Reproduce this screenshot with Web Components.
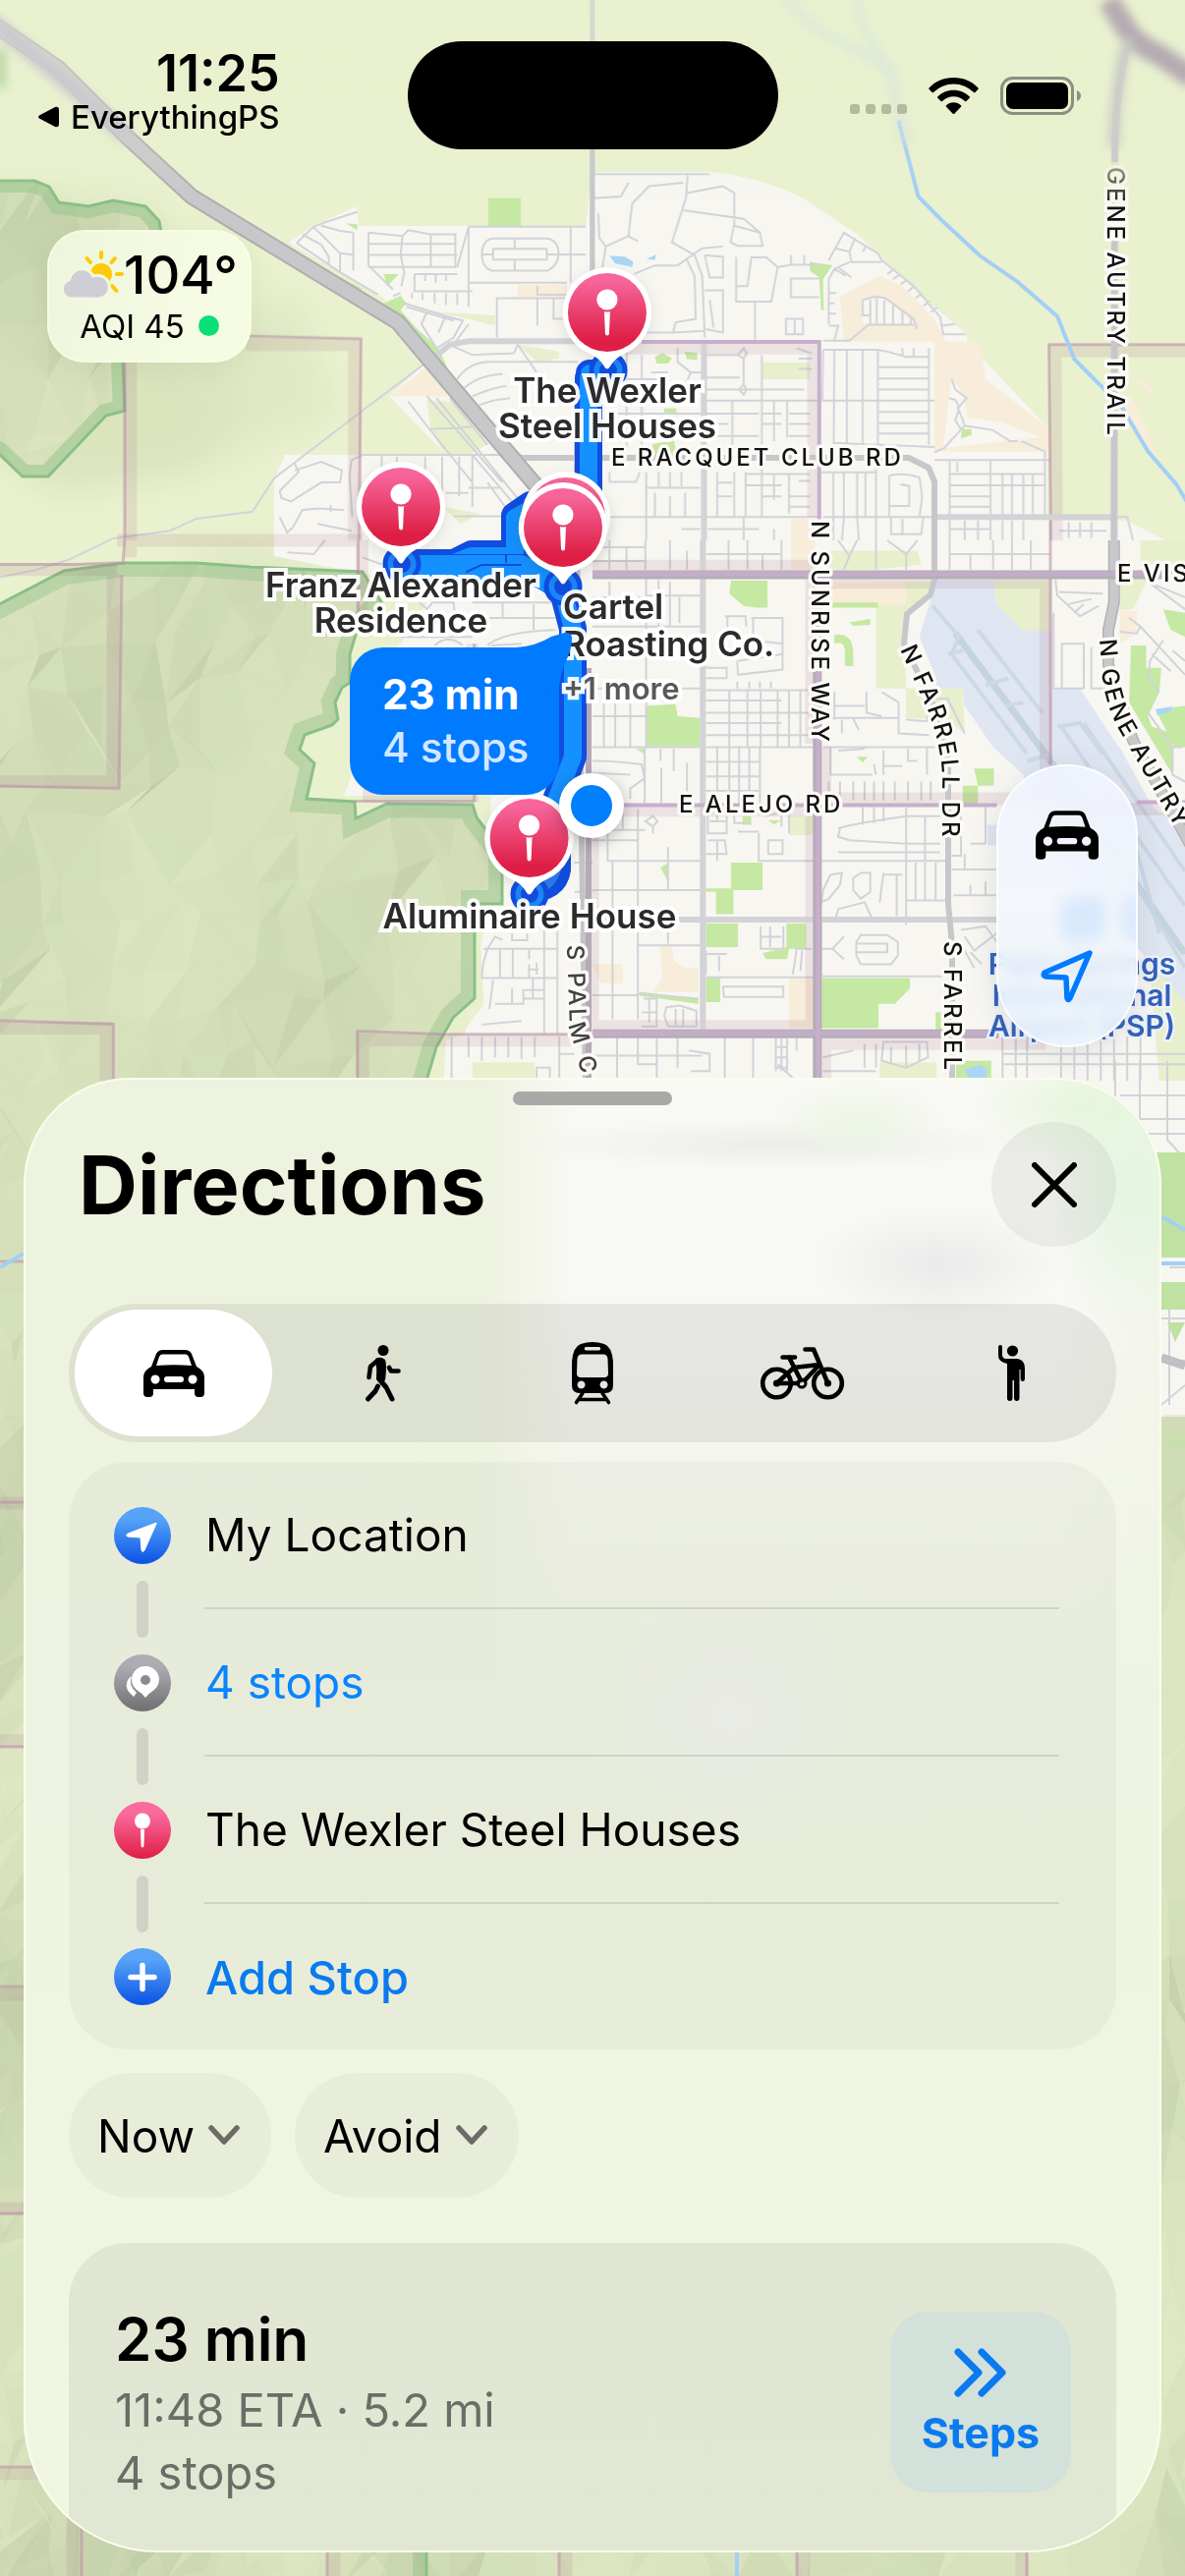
<!DOCTYPE html>
<html lang="en">
<head>
<meta charset="utf-8">
<meta name="viewport" content="width=device-width, initial-scale=1">
<title>Directions</title>
<style>
  body { margin: 0; background: #d5dfba; color: #000; font-family: Inter, "Liberation Sans", sans-serif; -webkit-font-smoothing: antialiased; }
</style>
</head>
<body>
<maps-app></maps-app>

<template id="t-app">
  <style>
    :host { display: flex; flex-direction: column; position: relative; min-height: 100vh; overflow: hidden; isolation: isolate; }
    area-map { position: absolute; inset: 0; z-index: -1; }
    weather-chip { margin: 82px 0 0 48px; align-self: flex-start; }
    .spacer { flex: 1; }
    map-controls { align-self: flex-end; margin: 0 48px 31px 0; }
    directions-sheet { margin: 0 24px 24px; }
  </style>
  <area-map></area-map>
  <status-bar></status-bar>
  <weather-chip></weather-chip>
  <div class="spacer"></div>
  <map-controls></map-controls>
  <directions-sheet></directions-sheet>
</template>

<template id="t-status">
  <style>
    :host { display: grid; grid-template-columns: 1fr 377px 1fr; padding-top: 42px; }
    .left { display: flex; flex-direction: column; align-items: flex-end; justify-self: start; padding: 8px 0 0 38px; }
    time { font-size: 52px; line-height: 50px; font-weight: 600; }
    a { display: flex; align-items: center; gap: 12px; font-size: 33px; line-height: 38px; font-weight: 500; color: #000; text-decoration: none; }
    .island { height: 110px; border-radius: 55px; background: #000; }
    .right { display: flex; align-items: flex-end; align-self: start; gap: 22px; padding: 36px 0 0 73px; }
    .dots { display: flex; gap: 6px; padding-bottom: 1px; }
    .dots i { width: 10px; height: 10px; border-radius: 3px; background: #b3bb9d; }
    svg { display: block; }
  </style>
  <div class="left">
    <time>11:25</time>
    <a href="#back"><svg width="22" height="22" viewBox="0 0 22 22"><path d="M2 9.5Q0 11 2 12.500L18 21Q22 22 22 18V4Q22 0 18 1Z"/></svg>EverythingPS</a>
  </div>
  <div class="island"></div>
  <div class="right">
    <div class="dots"><i></i><i></i><i></i><i></i></div>
    <svg width="51" height="38" viewBox="0 0 51 38"><path d="M25.500 0C35.500 0 44.500 4 50.500 10.500Q51 11.200 50.500 11.800L47.500 15Q46.700 15.700 46 15A29 29 0 0 0 5 15Q4.300 15.700 3.500 15L.5 11.800Q0 11.200.5 10.500C6.500 4 15.500 0 25.500 0ZM25.500 12.700C32 12.700 37.500 15.200 41.700 19.300Q42.300 20 41.700 20.700L38.400 24Q37.700 24.700 37 24A16.500 16.500 0 0 0 14 24Q13.300 24.700 12.600 24L9.300 20.700Q8.700 20 9.300 19.300C13.500 15.200 19 12.700 25.500 12.700ZM25.500 25.300C28.600 25.300 31 26.400 33 28.300Q33.700 29 33 29.700L26.300 36.700Q25.500 37.500 24.700 36.700L18 29.700Q17.300 29 18 28.300C20 26.400 22.400 25.300 25.500 25.300Z"/></svg>
    <svg width="83" height="39" viewBox="0 0 83 39"><rect x="1.500" y="1.500" width="72" height="36" rx="11" fill="none" stroke="#8b8f80" stroke-width="3"/><rect x="6" y="6" width="63" height="27" rx="7"/><path d="M78 14Q82 16 82 19.500T78 25Z" fill="#8b8f80"/></svg>
  </div>
</template>

<template id="t-weather">
  <style>
    :host { display: grid; justify-items: center; align-content: center; width: 208px; height: 135px; border-radius: 38px; box-sizing: border-box; background: linear-gradient(105deg, #edf5dc, #f4fbe2 60%, #f6fce4); box-shadow: inset 0 0 0 2px #fafee999, 0 8px 28px #52683018; }
    .temp { display: flex; align-items: center; font-size: 54px; line-height: 60px; font-weight: 500; }
    .aqi { display: flex; align-items: center; gap: 14px; font-size: 33px; line-height: 44px; }
    .aqi i { width: 21px; height: 21px; border-radius: 50%; background: #0be077; }
  </style>
  <div class="temp"><svg width="64" height="50" viewBox="0 0 64 50" aria-hidden="true"><g stroke="#ffc80a" stroke-width="4" stroke-linecap="round"><path d="M41 2V7M26.500 8L30 12M55 8L51.500 12M57 24H62M52 36L56.500 41"/></g><circle cx="41" cy="24" r="11" fill="#ffc80a"/><path d="M10 49A10 10 0 0 1 8.500 29.500A13 13 0 0 1 33 26A12 12 0 1 1 35 49Z" fill="#cfcdd6" stroke="#f1f8df" stroke-width="3"/></svg><span>104°</span></div>
  <div class="aqi"><span>AQI 45</span><i></i></div>
</template>

<template id="t-controls">
  <style>
    :host { display: flex; flex-direction: column; width: 144px; height: 288px; border-radius: 72px; overflow: hidden; background: linear-gradient(#f0f4fde8, #f3f6fcdc 50%, #ecf5fdd8); backdrop-filter: blur(7px); box-shadow: inset 0 0 0 2px #fffc, 0 6px 30px #4a587024; }
    button { flex: 1; border: 0; padding: 0; background: none; display: grid; place-items: center; }
  </style>
  <button aria-label="Driving map"><svg width="64" height="50" viewBox="0 0 62 48"><path fill-rule="evenodd" d="M13 4Q15 0 20 0H42Q47 0 49 4L54 17Q62 21 62 28V44Q62 48 58 48H56Q52 48 52 44V40H10V44Q10 48 6 48H4Q0 48 0 44V28Q0 21 8 17ZM19 4.500Q17 4.500 16 7L13 16Q31 14.500 49 16L46 7Q45 4.500 43 4.500ZM12 25.500a4.500 4.500 0 1 0 .1 0ZM50 25.500a4.500 4.500 0 1 0 .1 0ZM24 27a3 3 0 0 0 0 6H38a3 3 0 0 0 0-6Z"/></svg></button>
  <button aria-label="Track location"><svg width="54" height="54" viewBox="0 0 54 54" fill="none" stroke="#007aff" stroke-width="5.500" stroke-linejoin="round"><path d="M50 3L4 23Q2 26 5 27L26 28L27 49Q28 52 30 49Z"/></svg></button>
</template>

<template id="t-pin">
  <style>
    :host { position: absolute; display: flex; flex-direction: column; align-items: center; width: max-content; transform: translateX(-50%); left: calc(var(--x) * 1px); top: calc(var(--y) * 1px - 46px); }
    svg { width: 112px; height: 107px; flex: none; overflow: visible; filter: drop-shadow(0 4px 7px #3038301f); }
    ::slotted(*) { white-space: pre; text-align: center; font-size: 35px; line-height: 36px; font-weight: 600; color: #2b2b2b; -webkit-text-stroke: 8px #fffffff0; paint-order: stroke fill; }
    :host([align=start]) { align-items: flex-start; transform: none; }
    :host([align=start]) svg { margin-left: -56px; }
    :host([align=start]) ::slotted(*) { text-align: left; line-height: 38px; }
  </style>
  <svg viewBox="-10 0 112 107"><defs><linearGradient id="g" x2="0" y2="1"><stop offset=".1" stop-color="#f7659a"/><stop offset=".85" stop-color="#de1e45"/></linearGradient></defs><path d="M46 0A46 46 0 0 1 64 88Q54 92 49 101Q46 106 43 101Q38 92 28 88A46 46 0 0 1 46 0Z" fill="#fff"/><circle cx="46" cy="46" r="40" fill="url(#g)"/><circle cx="46" cy="33" r="10.600" fill="#fff"/><path d="M43 45Q46 46 49 45L48 68Q46 71 44 68Z" fill="#fff"/></svg>
  <slot></slot>
</template>

<template id="t-map">
  <style>
    :host { display: block; overflow: hidden; }
    .base { position: absolute; top: 0; left: 0; width: 100%; height: 100%; }
    .a { transform: scale(.3846, .3508); }
    .b { transform: translate(603px, 0) scale(.3846, .3508); }
    .c { transform: translate(0, 550px) scale(.3846, .3508); }
    .d { transform: translate(603px, 550px) scale(.3846, .3508); }
    path, polygon, rect { vector-effect: non-scaling-stroke; }
    .minor path { fill: none; stroke: #d2d3d9; stroke-width: 2; }
    .road text { font-size: 24px; font-weight: 500; letter-spacing: 3px; fill: #111; stroke: #fbfaf6; stroke-width: 7; stroke-linejoin: round; paint-order: stroke; }
    .place { font-size: 30px; font-weight: 600; fill: #3461bb; stroke: #eef2f8; stroke-width: 5; paint-order: stroke; text-anchor: middle; }
    .me { position: absolute; left: 569px; top: 787px; width: 42px; height: 42px; border: 12px solid #fff; border-radius: 50%; background: #007fff; box-shadow: 0 4px 16px #0004; }
    .callout { position: absolute; left: 356px; top: 659px; width: 213px; height: 150px; box-sizing: border-box; padding: 21px 0 0 33px; border-radius: 34px; background: #007aff; color: #fff; font-size: 42px; line-height: 54px; font-weight: 700; }
    .callout span { display: block; font-weight: 500; color: #d3e7ff; }
    .callout svg { position: absolute; right: -16px; top: -16px; }
    .callout b { position: relative; font-weight: 700; }
    map-pin .more { font-size: 31px; line-height: 54px; color: #585858; }
  </style>
  <svg class="base" viewBox="0 0 1206 2622" preserveAspectRatio="xMidYMin slice">
    <defs>
      <clipPath id="hills"><path id="hp" d="M-20 625L65 581 127 573 200 573 254 577 369 582 388 613 362 646 356 666 356 695 348 700 341 715 344 732 338 738 310 748 305 763 320 777 312 813 361 816 362 833 394 818 481 819 485 832 511 866V920H483V1016L461 1036 444 1066 434 1100V2640H-20Z"/></clipPath>
      <clipPath id="peak"><path id="pk" d="M-20 183L0 184 35 184 50 190 60 206 90 210 115 204 148 210 162 225 168 260 165 330 125 369 127 418 108 423 85 447 49 485H23L0 463-20 450Z"/></clipPath>
      <clipPath id="low"><rect y="1440" width="1206" height="1200"/></clipPath>
      <filter id="soft"><feGaussianBlur stdDeviation="5"/></filter>
      <filter id="haze" x="-20%" y="-20%" width="140%" height="140%"><feGaussianBlur stdDeviation="16"/></filter>
      <linearGradient id="fade" x2="0" y2="1"><stop stop-color="#e9f1cf"/><stop offset="1" stop-color="#e9f1cf" stop-opacity="0"/></linearGradient>
    </defs>
    <rect width="1206" height="2622" fill="#e9f1cf"/>
    <rect y="1430" width="1206" height="1200" fill="#d9e4bf"/>
    <g filter="url(#haze)" fill="#8fa36a" opacity=".16"><path d="M-20 190L160 215 175 360 250 400 200 480 60 500-20 450Z"/><path d="M130 370L300 300 340 420 200 480Z" opacity=".6"/><path d="M180 560L340 570 250 600Z"/></g>
    <path fill="#f7f6f1" d="M294 247L318 230 363 210 365 230H596L603 175H726Q780 182 818 202L872 238 934 298 984 340V348L1066 435V530H1147L1206 560V1442H430L452 1097 454 1050 473 1048 492 1023 488 971 492 950 500 810H350L408 648 400 590 279 566V488L290 463H454L396 403 435 368 390 303Z"/>
    <g fill="#e7efcc"><path class="b" d="M450 1052H575V1100H450Z"/><path class="a" d="M1150 905L1310 915V945L1220 920ZM1370 1000L1480 1020V1040L1420 1050ZM1130 1160L1230 1170 1290 1290 1240 1320 1180 1325 1140 1250ZM1170 1470L1270 1490 1220 1520Z"/><path class="c" d="M1050 180H1130L1060 300 940 270ZM1250 1515H1415V1568H1250ZM1270 1150L1230 1430 1180 1450 1200 1390 1280 1330Z"/><path class="d" d="M605 30H860L870 70 750 85 620 85ZM750 120H905L825 240 830 430H750ZM1065 115H1210V265H1140L1065 180ZM1450 0H1568V70H1450ZM1395 110H1470L1430 200H1395ZM830 430H980L985 560 940 520 830 515ZM520 800H590V855H520ZM760 1515H910V1568H760ZM1440 790H1568L1568 1568H1500Z"/></g>
    <g fill="#f8ecda"><path class="a" d="M1030 1150L1135 1060 1195 1150ZM1370 825H1500V862H1370Z"/><path class="b" d="M655 860L760 800 820 830 900 920 935 990 1025 995 1040 1100 1205 1240V1310H905V990H665ZM715 870V940H855L770 862ZM1420 1090L1480 1120V1145ZM1390 1150L1430 1150 1495 1320 1450 1280ZM525 1505H590V1568H525Z" fill-rule="evenodd"/><path d="M968 385L980 400 985 425 1020 430 1060 445 960 456Z" fill="#f7f6f1"/><path class="d" d="M525 0H590V85H525ZM630 122H830V185H630ZM1395 200L1440 205V270L1395 300ZM180 1175L210 1170 215 1220 240 1240H280V1310H160L185 1270ZM0 1230H80V1285H20ZM520 1270H590V1415H520Z"/></g>
    <g fill="#c5e8a3"><path class="a" d="M1292 575H1378V657H1292ZM915 648L945 650V668ZM1015 795H1055L1025 830ZM890 800L955 835 960 850ZM1015 880L1060 858 1075 880 1060 900 1100 950 1160 1010 1185 1070 1170 1075 1060 930Z"/><path class="b" d="M575 760L635 770 610 810 612 900H605L600 805 575 785ZM165 1035L185 1025 210 1040 200 1055H170ZM243 1020L277 1025V1045L250 1042ZM190 1185H222V1200H190ZM158 1290L215 1275 225 1330H165ZM978 1245L1003 1245V1262L975 1272Z"/><path class="d" d="M367 117H463V195H435L400 190 362 155ZM142 480L220 475 225 510 285 515V598H142ZM630 180H755V195H630ZM680 238L735 228V245L690 248ZM640 275Q690 265 690 330V365H668V320Q665 290 640 300ZM115 605H142L135 618ZM1010 662H1062V712H1020ZM980 712H1020V765H980ZM698 628L728 628 715 645ZM397 800H420V825H397ZM465 812H498L480 825ZM180 950L200 935V990ZM367 935H450V1015H373V1085H327V1020H300V1010H367ZM300 1112H385V1180H300ZM513 1112H565V1185H520L515 1215H460L450 1198 513 1180ZM605 1270H840V1300L800 1345H757V1415H605ZM300 1270H338V1340H300ZM125 1310L280 1330V1345L125 1322ZM962 1510H1055V1568H962ZM1425 305H1465V370L1505 370 1500 440 1470 510 1480 540 1535 560 1535 680 1420 470ZM1510 200L1568 210V280L1530 260ZM1490 490L1568 480V600H1540ZM908 1370H925V1420H908Z"/></g>
    <g fill="#a9d6f6"><path class="b" d="M45 742L85 745 108 760 105 775 60 765ZM143 752L168 738 165 755Z"/><path class="d" d="M1490 490L1535 482 1530 495 1495 508ZM985 1535L1025 1522 1045 1535 1040 1568H1000Z"/></g>
    <g class="d"><path fill="#dfe6f1" d="M910 115H1065V180L1140 262H1215V430H1290L1380 580 1400 610 1480 770 1568 850V1340L1440 1180 1200 900 1140 680 1060 600 985 480 980 430H910V400L865 280ZM1045 825H1075V885H1045Z"/><path fill="none" stroke="#c4d4df" stroke-width="7" d="M960 270L1205 630 1568 1200"/><path fill="none" stroke="#ccd9e4" stroke-width="4" d="M900 190L970 280 950 330 1150 620M1020 260L1190 500M940 330L980 320M1040 420L1100 400M1090 480L1140 470M1150 640L1215 620M1230 540L1290 530 1350 620M1240 540L1440 860 1568 1060M1300 530L1568 960M1440 900L1500 1140M1440 1000L1568 1240"/></g>
    <g clip-path="url(#hills)"><rect y="560" width="520" height="2070" fill="#d5e0bb"/><g id="mesh"></g><use href="#hp" fill="none" stroke="#9cc68f" stroke-opacity=".5" stroke-width="28"/></g>
    <g clip-path="url(#peak)"><rect width="200" height="500" fill="#d3deb9"/><g id="mesh2"></g><use href="#pk" fill="none" stroke="#9cc68f" stroke-opacity=".6" stroke-width="24"/></g>
    <g clip-path="url(#low)" id="mesh3"></g>
    <g fill="none" stroke="#8bbf88" stroke-width="3"><use href="#hp"/><use href="#pk"/></g>
    <g class="minor">
      <path class="a" d="M945 615L860 645 830 658 785 705M830 660L850 680 900 735V790M800 680L850 710 870 745V765M785 705L900 790 1000 855M850 655L900 670 935 675M935 675V785M975 675V770L1040 840M975 675L1065 685 1080 668 1140 680 1205 680V775H975M975 708H1205M975 740H1210M1065 685L1060 740 1070 790 1062 830M1140 680V775M1240 658V890M1240 658H1550M1300 692H1450Q1478 700 1478 735T1450 785H1300Q1275 775 1275 738T1300 692M1305 722H1447V753H1305ZM1275 738H1305M1447 738H1550M1362 692V722M1362 753V785M1240 820H1500M1510 658V820M1210 775L1240 658M1097 795H1210M1097 795V845H1250M1125 795V815M1153 795V820M1180 795V815M1090 850V865M1118 850V870M1150 850V880M1180 850V885M1210 850V885M1315 980V865H1500M1422 830V855H1500M1422 865V945M1465 865V925H1500M1060 850L1040 860M900 735L935 740M1070 880L1205 925 1225 930 1200 980 1155 1010 1115 940 1130 905M1075 890L1200 930M1178 920L1160 965M1240 940L1200 1000M1190 1000L1250 1030 1360 1025 1370 1000M1210 1100Q1240 1050 1300 1050H1530M1225 1130Q1260 1090 1330 1085M1250 1150Q1300 1125 1340 1120M1260 1180Q1300 1160 1350 1155M1370 1000L1420 1080M1130 1150L1330 1400M1080 1165L1140 1250 1250 1400M1155 1155L1380 1460M1190 1155L1290 1290M1140 1245L1250 1238M960 1320H1380M960 1320L930 1335 925 1380 932 1500M1010 1320V1440M1050 1325V1340M1125 1325V1410M1170 1325V1480M1215 1325V1440M1250 1325V1470M1290 1400L1340 1475M1240 1415H1320M1200 1498H1330M1180 1430H1240M1250 1320L1370 1475M780 1365L850 1340 905 1365 900 1400 850 1400 770 1455 745 1445 740 1425 790 1370 780 1345M740 1500L760 1545 775 1530 800 1480 840 1475 910 1480M840 1520L930 1540M875 1465V1485M1130 1050L955 1195 725 1388 668 1485 520 1505 450 1540 300 1562 180 1625 90 1655 0 1675"/>
      <path class="b" d="M0 505H310M252 505L247 575 210 703 270 740 290 800 297 980M0 575L75 570 95 530M250 560L345 540 375 560V650L365 703 385 713H450L443 675 375 655M240 610L400 635 443 675M15 620L18 690 35 715 95 685 105 590 150 540 240 530M35 715L20 820M95 685L120 700M110 795L165 770H225L290 720 345 715M297 740L345 745V805H310L297 740M380 745V875H473L490 775 460 747H420L410 830H380M430 875V985M490 775L525 768H605M525 740V768M560 740V768M600 808H525V862H600M512 925H557V970H512ZM535 925V970M213 965L220 935 275 925M297 842H345V965L300 955M310 870L320 950M250 755L270 800 273 925M110 965H215L297 960M625 755L665 675 755 735 765 755 850 830 920 920 928 970H988M640 720L680 730 685 760H765M695 690L680 730M715 730L725 712M680 760L640 780 625 810V940M640 780L670 800M650 775L685 805M610 988L680 988 730 942H850M625 945H650L640 988M625 850H645M625 880H640M625 910H645M715 870L750 860 775 865 850 925 858 955M715 870V915H732M735 870V942M752 865V940M772 870V940M795 885V940M820 905V940M842 920V940M780 795L800 780M795 810L815 795M815 825L833 810M835 845L852 830M855 865L872 850M875 888L893 873M895 905L912 892M920 945L960 940M610 1015H755L780 1020 830 1035H890M610 1015L608 1162H905M640 1015L638 1285 905 1297M673 1015V1285M715 1015V1287M755 1015V1290M890 1010V1290M755 1065H888M755 1098H888M755 1130H888M755 1195H888M755 1228H888M755 1258H888M850 1010V1035M820 1010V1030M300 1030H385M300 1095H390M300 1130H560M300 1162H600M448 1030V1500M370 1162V1300M480 1162V1280M515 1162V1270M300 1200H440M450 1200H500M520 1200H575M300 1230H360M450 1230H500M520 1230H575M300 1265H440M520 1265H575M385 1030L400 1010 408 1025 400 1040ZM400 1040V1115L388 1130 400 1145 408 1130 400 1115M540 1010L580 1025M545 1040H580M545 1070H580M130 1030V1300M155 1080H200M30 1100H190M130 1160L200 1155M225 1010V1050L260 1080H290M240 1130L260 1080M60 1200H290M60 1240H190M90 1000V1300M945 1335V1568M905 1335H1210M1197 1310V1500M1053 1335V1568M945 1375H1197M945 1408H1197M965 1340V1370M1085 1375V1495M1110 1375V1495M1140 1375V1495M1165 1375V1495M945 1440H1050M945 1470H1050M985 1510V1568M1020 1510V1568M1085 1510V1568M1110 1510V1568M1140 1510V1568M945 1535H1050M950 1100L960 1130 990 1155 970 1180 960 1160 943 1155M965 1180L975 1205 985 1235 1060 1248 1105 1280H1125M985 1235L955 1270 930 1300 905 1312M970 1185L960 1220 975 1245M1135 1280L1197 1310M40 1500H600M45 1370V1398H115L125 1370M142 1415H285M142 1370V1568M175 1370V1415M205 1370V1415M235 1370V1410M165 1430V1500M205 1440V1500M245 1430V1500M330 1370V1500M375 1370V1500M405 1370V1500M330 1400H370M330 1440H370M405 1375H575M405 1408H445M450 1408H500M520 1375V1490M480 1375V1450M450 1440H500M520 1440H575M520 1470H575M545 1395H575M235 1535H285M305 1535H440M400 1500V1568M480 1535V1568M605 1370H750M637 1370V1568M665 1370V1500M700 1370V1500M722 1370V1500M750 1340V1568M785 1380Q820 1370 865 1385L872 1440 865 1500M785 1380V1500M815 1405L838 1410V1468H785M610 1500H905M665 1500L660 1568M700 1500L705 1568M790 1500V1550H870L875 1500M820 1505V1550M1210 1510V1568M1235 1540H1360M1260 1515V1560M1290 1515V1560M1320 1515V1560M1380 1500H1415L1430 1568"/>
      <path class="c" d="M1060 280H1250M1110 180L1130 200 1145 180H1200L1210 280M1250 180H1470M1285 225H1470M1290 305Q1330 265 1470 260M1300 305L1380 300M1330 180V225M1412 185V260M1150 305Q1185 270 1225 305M1280 1185H1475M1275 1270H1475M1290 1185L1278 1230 1275 1270M1323 1185V1270M1357 1185V1270M1400 1185V1215M1440 1130V1430M1475 1130V1430M1400 1230V1270M1420 1225V1260M1400 1245H1425M1305 1275L1295 1360M1310 1345H1385V1305H1440M1355 1300V1345M1385 1330H1440M1275 1405L1380 1395M1410 1270V1330M1290 1185L1310 1150 1330 1160M1355 1140V1160H1395V1140M1195 1440V1568M1240 1440V1500M1275 1440V1510M1310 1440V1500M1345 1440V1500M1380 1440V1505M1415 1440V1500M1420 1568V1530H1455V1568M1480 1440V1568M1480 1490H1520M1520 935H1568M1520 1020H1568M1520 1100H1568M1545 860V1200M760 35L830 40 860 0M960 50L1010 70"/>
      <path class="d" d="M0 20H140M0 60H140M45 0V85M90 20V85M140 0V85M205 0V85M250 30V85M300 40H500M360 0V85M410 0V85M450 40V85M500 0V85M650 0L680 45 665 85M680 45L700 0M780 0L830 40 860 0M830 40V85M750 0V85M945 0V85M945 40H1210M1000 40V85M1060 0V85M1110 0V85M1160 0V85M45 120V160M0 165H140M142 110V600M142 160H285M175 115V250M205 120V250M230 165V240M0 250H285M350 220H405L407 250M420 225H503V375L385 390 383 350M425 225V290L503 300M385 350L503 330M357 255V220M300 370H355V400H300M383 410V430M415 410V430M443 410V430M472 410V430M0 430H290M300 435H590M300 465H500M300 500H590M300 530H500M300 565H590M362 435V768M410 435V600M445 435V600M490 435V600M520 435V600M550 435V600M0 600H290M300 600H595M300 643H440M300 685H440M300 727H440M330 600V768M388 600V768M415 600V768M443 600V768M0 510H140M30 470V600M60 470V600M100 470V600M0 640Q60 640 130 650L138 690 100 720V750M0 675L100 680M0 720L60 715M138 600V768H0M180 605V640M215 605V670M250 645V730M182 660V768M160 830V850M140 815L160 800 172 815 160 830ZM40 780V930M0 840H140M0 870H120M120 780V1110M40 930H290M0 1015H290M80 780V840M53 930V1390M0 1110H50M120 1110V1390M200 890V1015M200 1110V1170M120 1175H290M305 780V850H355V780M310 815H355M330 780V815M375 770V820H420M385 845H440M305 870H350L355 910H300M330 870V930M465 870H503V910H465ZM440 850V930H590M520 770V850M455 800L500 790V830M640 440V520M610 515H810M640 480H720M660 520V560M690 518L705 550M725 440V500L765 510M810 468V560L890 565M765 440L810 470M830 520L885 525 890 480M900 460H940L985 560M630 600V680M610 600H920M650 610L720 605M770 610V680M745 650L750 680M835 605V640H860M885 600V680M630 680H740M770 655H820M625 700V755M655 700V755M690 700V755M720 700V755M745 700V755M770 700V755M800 700V755M835 700V755M870 700V755M895 700V755M650 835Q700 820 830 800H920M655 835L650 860 680 870 830 880H920M715 775V825M745 775V820M770 775V815M830 775V1115M880 800V930M650 905H920M605 930H940M630 970L610 1015 605 1060M630 970L660 965 655 1000 625 1040 605 1050M690 980L710 965H735V1020L710 1040 690 1015ZM770 965L760 1050M770 970H820M805 970V1090M830 1045H940M640 1110L650 1070 720 1050 745 1110M855 935V1045M880 935V1045M908 935V1045M605 1185H635L665 1150M635 1185L665 1215M710 1145H780L808 1165V1205L790 1230H710L698 1205V1165ZM700 1170H780V1195H700M605 1265H925M605 1265V1110M345 1295H505V1325H348ZM300 1190V1260M335 1205V1250M355 1200H300M300 1268H590M0 1320H120M120 1315L280 1330M445 1120V1185H505V1120M470 1120V1180M445 1150H500M535 1185H580M540 1190L530 1260M555 1190L550 1250M135 1330H170V1410H130M150 1330V1400M130 1370H170M195 1355L230 1350 275 1365V1410H200L190 1380ZM220 1360V1410M240 1360V1410M0 1495H290M65 1440V1560M120 1440V1520H170M170 1440V1568M225 1440V1530M255 1480L310 1490V1540L260 1540M350 1440V1568M425 1440V1568M485 1445V1540M500 1445V1540M515 1445V1540M485 1470H515M485 1500H515M485 1530H515M540 1445V1480M490 1520L530 1560M770 1455H885L888 1500 830 1530 765 1510ZM790 1470V1515M830 1465V1525M865 1460V1510M610 1500L690 1480M720 1460V1530M750 1460V1530M610 1540H750M1085 1440V1568M1120 1440V1568M1150 1440V1568M1240 1440V1568M1275 1440V1568M1310 1440V1568M1345 1440V1568M1380 1440V1568M1415 1440V1568M1450 1440V1568M1085 1520H1568M1085 1490H1568M1225 115L1230 160 1290 220 1340 190M1235 150L1350 155M1260 185L1320 170M1275 210L1300 185M1242 300H1300V430H1242ZM1220 210V430H1300M1320 310V430H1365M1395 265L1440 270 1450 250M1420 225L1450 250 1568 390M1470 120L1568 200M1490 130L1568 165M1510 290L1475 350 1470 400 1500 440M1535 320L1568 350M1470 500L1535 600H1560M1535 600V680L1568 700M1480 330L1530 380M975 780V915H950M1040 770V880M1000 880H1040M950 955H1070M985 910V955M1000 1000V1030M1040 990V1030M955 1030H1070M975 1130L1040 1120 1070 1165M985 1150L1010 1190 1070 1140M980 1180L1010 1240M1000 1195L1030 1230"/>
      <path d="M1135 1080V1130M1160 1080V1180M1188 1080V1160L1206 1180M1140 1115H1206M1150 1139H1206M1165 1154H1206M1190 1290H1206M1182 1342H1206M1182 1385H1206M1190 1310V1430M1182 1430L1206 1410"/>
    </g>
    <g fill="#bfe2a2"><path d="M1176 1173H1206V1280H1176ZM1182 1305H1206V1333H1182ZM1188 1346H1206L1196 1366Z"/><path fill="#cadfaf" d="M1182 1459H1206V1475H1182Z"/></g>
    <g fill="none" stroke="#9c5f78" stroke-opacity=".13" stroke-width="13"><path class="a" d="M345 1050V1568M650 1000H938V1568"/><path class="b" d="M50 1010H585V1500M1568 1018H1224L1228 1568"/><path class="c" d="M310 0H960M345 0V50M0 85H310M300 100L298 700H0M958 0V270M960 740H1250V300M0 1415H280V1568M1568 1450H960V1568"/><path class="d" d="M0 75H590M580 110V590M600 122H1200V760M615 600V750H1200M0 783H580V1410H0V800M600 1460H1200M615 1440V1568M1230 780H1568"/><path d="M0 1530H24M0 1772H24M0 2030H24M0 2248H24M0 2518H80M74 2560V2622M340 2590V2622M576 2590V2622M818 2590V2622M1040 2590V2622"/></g>
    <g fill="none" stroke="#b98aa4" stroke-opacity=".55" stroke-width="3"><path class="a" d="M330 1050V1568M650 975L955 983 950 1568"/><path class="b" d="M1568 1000H1208L1213 1568"/><path class="c" d="M330 0L325 70M0 70H200L320 65M322 100L315 720 0 713M948 0V270M940 757H1255V300M0 1393L300 1404V1568M1568 1433H1180L946 1424V1568"/><path d="M1069 550V778M0 1284H24M0 1529H24M0 1778H24M0 2022H24M0 2253H24M0 2511H45M83 2560V2622M333 2590V2622M569 2590V2622M811 2590V2622M1045 2590V2622"/></g>
    <g fill="none" stroke="#a3cff5" stroke-width="4"><path class="b" d="M810 350L862 570 920 635 1025 742 1125 818 1230 918 1275 1042 1400 1180 1470 1310 1545 1405 1575 1460"/><path d="M0 1290L24 1276M750 2590V2622M1182 1238L1206 1252M1182 1286H1206"/></g>
    <g fill="none" stroke="#cfe0e4" stroke-width="9" opacity=".7" filter="url(#soft)"><path class="b" d="M500 -10L600 90 790 200 800 280 830 420M695-10L720 90 790 210"/></g>
    <g fill="none" stroke="#d3d3d7" stroke-width="6"><path class="b" d="M295 990V1568"/><path class="d" d="M292 0V1430M0 1100H1070"/><path class="b" d="M905 1500H1380"/><path class="a" d="M1150 1035L1190 1000 1240 990H1550"/></g>
    <g fill="none" stroke="#c7c7cb" stroke-width="6"><path class="b" d="M0 -20V800" stroke-width="5"/><path d="M526 466H603M603 466L925 466 945 476 951 490V590L947 605 923 625 920 655 957 733 965 778V920L969 962V1100"/><path class="b" d="M1425 100Q1380 250 1382 480L1380 1568" stroke-width="7"/></g>
    <g fill="none"><path class="d" d="M1380 0V180L1365 260 1365 360 1430 580 1600 920" stroke="#b3b3b6" stroke-width="12"/><path class="d" d="M1380 0V180L1365 260 1365 360 1430 580 1600 920" stroke="#c9c9cc" stroke-width="9"/></g>
    <g fill="none"><path d="M587 410V480M587 550L596 1100" stroke="#c4c3c8" stroke-width="6"/><path d="M599 680V1110" stroke="#b7a9b8" stroke-width="6"/><path class="d" d="M0 100H1568M0 1432H1075M595 110V1568" stroke="#b5adb9" stroke-width="9"/><path class="d" d="M0 97H1568M0 1430H1075" stroke="#c3aec8" stroke-width="5"/><path class="d" d="M597 110V1568M0 768H1070M1440 760H1568" stroke="#c7b0cc" stroke-width="4"/><path class="b" d="M130 992H600V1568" stroke="#c7b0cc" stroke-width="4"/></g>
    <path d="M1182 1382L1206 1390" stroke="#bfbfc5" stroke-width="9"/>
    <g fill="none" stroke-linejoin="round"><path d="M-20 15L60 70 130 140 195 200 405 328 430 358 580 535" stroke="#aeaeb1" stroke-width="17"/><path d="M-20 15L60 70 130 140 195 200 405 328 430 358 580 535" stroke="#c8c8cb" stroke-width="13"/></g>
    <rect width="1206" height="200" fill="url(#fade)" opacity=".5"/>
    <g fill="none" filter="url(#soft)"><path d="M-10 20L60 78 130 140" stroke="#cacace" stroke-width="16"/><path d="M1128 0L1150 35Q1165 50 1180 56L1215 80" stroke="#b5aab2" stroke-width="22"/><path d="M1148 40Q1135 80 1134 150" stroke="#cccdc8" stroke-width="12"/><path d="M0 50V90" stroke="#bcd8a4" stroke-width="12"/></g>
    <g fill="none" stroke-linejoin="round" stroke-linecap="round">
      <path d="M412 573H462L480 564H524V525L540 514M540 575L572 598 583 640V770L560 830 562 880M599 385V520M600 380H620" stroke="#104de0" stroke-width="28"/>
      <path d="M412 573H462L480 566H524V527L540 518M540 577L572 598 583 640V770L563 822 560 890M599 385V520M600 380H620" stroke="#1590ff" stroke-width="18"/>
      <path d="M412 578H540L572 598" stroke="#104de0" stroke-width="28"/><path d="M412 577H530L572 598" stroke="#1590ff" stroke-width="24"/><path d="M475 582L490 575H530M515 565V572" stroke="#104de0" stroke-width="2"/>
      <path d="M539 905Q565 905 568 885V870" stroke="#104de0" stroke-width="26"/><path d="M542 903Q560 900 564 880" stroke="#2a7cf0" stroke-width="16"/>
    </g>
    <g fill="#1a87fb" stroke="#104de0" stroke-width="5"><circle cx="409" cy="574" r="17"/><circle cx="573" cy="597" r="17"/><circle cx="539" cy="910" r="17"/><circle cx="619" cy="377" r="17"/></g>
    <g fill="#104de0"><circle cx="409" cy="574" r="9"/><circle cx="573" cy="597" r="9"/><circle cx="539" cy="910" r="9"/><circle cx="619" cy="377" r="9"/></g>
    <defs>
      <path id="r2" d="M916 661L945 725Q960 765 959 800V900"/><path id="r4" d="M1119 651L1122 690Q1126 720 1140 745L1230 900"/><path id="r5" d="M577 962L580 1050Q590 1080 596 1120"/>
    </defs>
    <g class="road">
      <text x="622" y="474">E RACQUET CLUB RD</text>
      <text x="691" y="827">E ALEJO RD</text>
      <text x="1137" y="592">E VIS</text>
      <text transform="translate(826 530) rotate(90)">N SUNRISE WAY</text>
      <text><textPath href="#r2">N FARRELL DR</textPath></text>
      <text transform="translate(961 958) rotate(90)">S FARREL</text>
      <text><textPath href="#r4">N GENE AUTRY</textPath></text>
      <text fill-opacity=".8"><textPath href="#r5">S PALM C</textPath></text>
      <text transform="translate(1127 170) rotate(90)">GENE AUTRY TRAIL</text>
    </g>
    <rect x="1115" y="165" width="36" height="45" fill="url(#fade)" opacity=".7"/>
    <g fill="#3d9bf5"><rect x="1079" y="912" width="46" height="46" rx="12"/><path d="M1156 912H1152Q1142 912 1142 924V946Q1142 958 1152 958H1156Z"/></g>
    <text class="place"><tspan x="1101" y="992">Palm Springs</tspan><tspan x="1101" y="1024">International</tspan><tspan x="1101" y="1055">Airport (PSP)</tspan></text>
  </svg>
  <map-pin style="--x:618;--y:318"><span>The Wexler
Steel Houses</span></map-pin>
  <map-pin style="--x:408;--y:516"><span>Franz Alexander
Residence</span></map-pin>
  <map-pin style="--x:576;--y:526"></map-pin>
  <map-pin align="start" style="--x:573;--y:537"><span>Cartel
Roasting Co.</span><span class="more">+1 more</span></map-pin>
  <map-pin style="--x:539;--y:853"><span>Aluminaire House</span></map-pin>
  <div class="callout"><svg width="60" height="70" viewBox="0 0 60 70"><path d="M0 16Q20 15 36 5L50 1Q58 0 57 9Q56 20 51 30Q45 42 43 66L20 60Z" fill="#007aff"/></svg><b>23 min</b><span>4 stops</span></div>
  <div class="me"></div>
</template>

<template id="t-sheet">
  <style>
    :host { display: flex; flex-direction: column; overflow: hidden; padding: 14px 46px 0; border-radius: 108px 108px 136px 136px; position: relative;
      background: radial-gradient(110px 60px at 1080px 30px, #e6f6da, transparent), radial-gradient(90px 150px at 1130px 110px, #e3f5e0, transparent), radial-gradient(90px 40px at 850px 45px, #ebf6e2, transparent), radial-gradient(260px 26px at 770px 68px, #ececea, transparent), radial-gradient(130px 60px at 930px 190px, #ebeaea, transparent), radial-gradient(160px 130px at 720px 650px, #f1f3ee, transparent), linear-gradient(transparent 240px, #eff4e2 620px, #f1f6e1), linear-gradient(90deg, #eef3df, #eef3df 470px, #f8f8f5 560px, #f8f8f5 1050px, #f3f5ec); }
    :host::after { content: ""; position: absolute; inset: 0; border-radius: inherit; box-shadow: inset 0 0 0 2px #fafdeb; pointer-events: none; }
    .grab { width: 162px; height: 14px; border-radius: 7px; background: #a9a9a7; align-self: center; }
    header { display: flex; align-items: center; justify-content: space-between; margin-top: 17px; padding-left: 10px; }
    h1 { margin: 0; font-size: 83px; line-height: 96px; font-weight: 700; }
    .close { width: 127px; height: 127px; border: 0; border-radius: 50%; padding: 0; background: #0000000d; display: grid; place-items: center; }
    travel-modes { margin-top: 58px; }
    stop-list { margin-top: 20px; }
    .filters { display: flex; gap: 24px; margin-top: 24px; }
    route-card { margin-top: 46px; }
  </style>
  <div class="grab"></div>
  <header>
    <h1>Directions</h1>
    <button class="close" aria-label="Close"><svg width="46" height="46" viewBox="0 0 46 46" stroke="#000" stroke-width="6" stroke-linecap="round"><path d="M3 3L43 43M43 3L3 43"/></svg></button>
  </header>
  <travel-modes></travel-modes>
  <stop-list>
    <stop-row kind="here">My Location</stop-row>
    <stop-row kind="stops" tone="link">4 stops</stop-row>
    <stop-row kind="pin">The Wexler Steel Houses</stop-row>
    <stop-row kind="add" tone="action">Add Stop</stop-row>
  </stop-list>
  <div class="filters">
    <filter-pill name="when" value="Now"></filter-pill>
    <filter-pill name="avoid" value="Avoid"></filter-pill>
  </div>
  <route-card></route-card>
</template>

<template id="t-modes">
  <style>
    :host { display: block; }
    fieldset { display: grid; grid-template-columns: repeat(5, 1fr); margin: 0; padding: 0; border: 0; height: 141px; border-radius: 71px; background: #00000012; }
    label { display: grid; place-items: center; margin: 6px; border-radius: 65px; position: relative; }
    input { appearance: none; position: absolute; inset: 0; margin: 0; }
    label:has(:checked) { background: #fff; }
    svg { overflow: visible; }
    .s { fill: none; stroke: #000; stroke-linecap: round; stroke-linejoin: round; }
  </style>
  <fieldset aria-label="Travel mode">
    <label><input type="radio" name="mode" aria-label="Drive" checked><svg width="62" height="48" viewBox="0 0 62 48"><path fill-rule="evenodd" d="M13 4Q15 0 20 0H42Q47 0 49 4L54 17Q62 21 62 28V44Q62 48 58 48H56Q52 48 52 44V40H10V44Q10 48 6 48H4Q0 48 0 44V28Q0 21 8 17ZM19 4.500Q17 4.500 16 7L13 16Q31 14.500 49 16L46 7Q45 4.500 43 4.500ZM12 25.500a4.500 4.500 0 1 0 .1 0ZM50 25.500a4.500 4.500 0 1 0 .1 0ZM24 27a3 3 0 0 0 0 6H38a3 3 0 0 0 0-6Z"/></svg></label>
    <label><input type="radio" name="mode" aria-label="Walk"><svg width="36" height="58" viewBox="0 0 36 58"><circle cx="18" cy="5.500" r="5.500"/><path d="M10 14Q15 11 20 15Q22 20 20 36L16 39L11 35Q12 25 10 14Z"/><g class="s" stroke-width="4.600"><path d="M12 16L5 22 3.500 33M24 23L26 26.500H33.500"/><path stroke-width="5" d="M14 35L21 43 27 55M12.500 42L10 47 2.500 55"/></g></svg></label>
    <label><input type="radio" name="mode" aria-label="Transit"><svg width="42" height="63" viewBox="0 0 42 63"><path fill-rule="evenodd" d="M9 2Q21-2 33 2Q41 5 42 20V44Q42 52 34 52H8Q0 52 0 44V20Q1 5 9 2ZM14.500 5a1.600 1.600 0 0 0 0 3.500H27.500a1.600 1.600 0 0 0 0-3.500ZM10 12.500Q6 12.500 5.500 17L5 32Q5 36 9 36H33Q37 36 37 32L36.500 17Q36 12.500 32 12.500ZM9.500 39.500a4 4 0 1 0 .1 0ZM32.500 39.500a4 4 0 1 0 .1 0Z"/><g class="s" stroke-width="3.600"><path d="M11 52L4.500 61.500M31 52L37.500 61.500M8 58.500H34"/></g></svg></label>
    <label><input type="radio" name="mode" aria-label="Cycle"><svg width="85" height="54" viewBox="0 0 85 54"><g class="s" stroke-width="4.600"><circle cx="16.500" cy="37" r="14.300"/><circle cx="68.500" cy="37" r="14.300"/><path d="M22.500 10.500H35M29 10.500L41 34M45.500 2.500H54L68.500 37M16.500 37H38M16.500 37L34 21L60 18L45 34"/><circle cx="42" cy="37" r="4" stroke-width="3"/></g><circle cx="16.500" cy="37" r="3.600"/><circle cx="68.500" cy="37" r="3.600"/></svg></label>
    <label><input type="radio" name="mode" aria-label="Rideshare"><svg width="27" height="57" viewBox="0 0 27 57"><circle cx="14.500" cy="6" r="5.600"/><path d="M7 14H19Q27 15 27 24V34Q27 37 24.800 37T22.600 34V25H21.500V54Q21.500 57 18.800 57T16 54V36H14.500V54Q14.500 57 11.700 57T9 54V19Q0 17 0 11V2Q0 0 2 0T4 2V10Q4 13 7 14Z"/></svg></label>
  </fieldset>
</template>

<template id="t-list">
  <style>
    :host { display: block; border-radius: 60px; background: #00000008; }
  </style>
  <slot></slot>
</template>

<template id="t-row">
  <style>
    :host { display: flex; align-items: center; padding: 0 58px 0 46px; gap: 34px; }
    .mark { position: relative; flex: none; width: 58px; height: 58px; }
    .mark svg { display: block; }
    .link { position: absolute; left: 23px; top: 75px; width: 12px; height: 58px; border-radius: 6px; background: #cfd2c4; }
    .text { flex: 1; height: 148px; border-bottom: 2px solid #d0d4c5; display: flex; align-items: center; padding-left: 1px; font-size: 46px; }
    :host(:last-child) .link { display: none; }
    :host(:last-child) .text { border: 0; }
    :host([tone=link]) .text { color: #0a84ff; }
    :host([tone=action]) .text { color: #0a7aef; font-weight: 500; font-size: 47px; }
  </style>
  <div class="mark"><span></span><i class="link"></i></div>
  <div class="text"><slot></slot></div>
</template>

<template id="t-pill">
  <style>
    :host { display: block; }
    label { display: flex; align-items: center; gap: 14px; height: 127px; padding: 0 32px 0 29px; border-radius: 64px; background: #00000008; }
    select { appearance: none; field-sizing: content; border: 0; padding: 0; margin: 0; background: none; color: #000; font: 400 46px/60px Inter, "Liberation Sans", sans-serif; }
  </style>
  <label><select></select><svg width="32" height="21" viewBox="0 0 32 21" fill="none" stroke="#6a6c65" stroke-width="5.500" stroke-linecap="round" stroke-linejoin="round"><path d="M3 3L16 17L29 3"/></svg></label>
</template>

<template id="t-route">
  <style>
    :host { display: flex; align-items: center; justify-content: space-between; padding: 58px 46px 49px 47px; border-radius: 60px 60px 0 0; background: #0000000f; }
    h2 { margin: 0; font-size: 60px; line-height: 80px; font-weight: 600; }
    p { margin: 0; font-size: 47px; line-height: 64px; color: #6b6e66; }
    button { display: flex; flex-direction: column; align-items: center; justify-content: center; gap: 11px; width: 184px; height: 184px; padding: 0; border: 0; border-radius: 38px; background: #d2e1da; color: #0a7aef; font: 700 43px/50px Inter, "Liberation Sans", sans-serif; }
  </style>
  <div><h2>23 min</h2><p>11:48 ETA · 5.2 mi</p><p>4 stops</p></div>
  <button><svg width="54" height="50" viewBox="0 0 54 50" fill="none" stroke="#0a7aef" stroke-width="7" stroke-linecap="round" stroke-linejoin="round"><path d="M4 4L25 25L4 46M28 4L49 25L28 46"/></svg>Steps</button>
</template>

<script>
  class Piece extends HTMLElement {
    constructor() {
      super();
      this.attachShadow({ mode: "open" }).append(document.getElementById(this.constructor.template).content.cloneNode(true));
    }
  }

  class StatusBar extends Piece { static template = "t-status"; }
  class WeatherChip extends Piece { static template = "t-weather"; }
  class MapControls extends Piece { static template = "t-controls"; }
  class MapPin extends Piece { static template = "t-pin"; }
  class TravelModes extends Piece { static template = "t-modes"; }
  class StopList extends Piece { static template = "t-list"; }
  class RouteCard extends Piece { static template = "t-route"; }
  class DirectionsSheet extends Piece { static template = "t-sheet"; }
  class MapsApp extends Piece { static template = "t-app"; }

  // Shaded relief: a jittered triangle mesh lit from the north-west.
  class AreaMap extends Piece {
    static template = "t-map";
    connectedCallback() {
      this.relief("mesh", 0, 560, 520, 2622, 36, 7);
      this.relief("mesh2", 0, 180, 170, 490, 38, 3);
      this.relief("mesh3", 0, 1440, 1206, 2622, 38, 5);
    }
    relief(id, x0, y0, x1, y1, step, seed) {
      let s = seed;
      const rnd = () => (s = (s * 16807) % 2147483647) / 2147483647;
      const cols = Math.ceil((x1 - x0) / step) + 3, rows = Math.ceil((y1 - y0) / (step * 1.3)) + 3;
      const pts = [];
      for (let j = 0; j < rows; j++) for (let i = 0; i < cols; i++) {
        const x = x0 + (i - 1) * step + (rnd() - .5) * step * .9, y = y0 + (j - 1) * step * 1.3 + (rnd() - .5) * step;
        const z = Math.sin(x / 61 + y / 97) * 1.4 + Math.sin(x / 41 - y / 57) + Math.sin(y / 75) + rnd() * .8;
        pts.push([x, y, z]);
      }
      let out = "";
      const face = (a, b, c) => {
        const ux = b[0] - a[0], uy = b[1] - a[1], uz = b[2] - a[2], vx = c[0] - a[0], vy = c[1] - a[1], vz = c[2] - a[2];
        const n = ux * vy - uy * vx || 1;
        const gx = (uz * vy - vz * uy) / n, gy = (ux * vz - vx * uz) / n;
        const t = Math.max(-1, Math.min(1, (gx * .8 + gy * .5) * 14));
        const col = t > 0 ? `rgba(229,237,199,${(t * .6).toFixed(2)})` : `rgba(167,181,141,${(-t * .42).toFixed(2)})`;
        out += `<path d="M${a[0].toFixed(0)} ${a[1].toFixed(0)}L${b[0].toFixed(0)} ${b[1].toFixed(0)}L${c[0].toFixed(0)} ${c[1].toFixed(0)}Z" fill="${col}"/>`;
      };
      for (let j = 0; j < rows - 1; j++) for (let i = 0; i < cols - 1; i++) {
        const p = pts[j * cols + i], q = pts[j * cols + i + 1], r = pts[(j + 1) * cols + i], t = pts[(j + 1) * cols + i + 1];
        if (rnd() > .5) { face(p, q, r); face(q, t, r); } else { face(p, q, t); face(p, t, r); }
      }
      this.shadowRoot.getElementById(id).innerHTML = out;
    }
  }

  const MARKS = {
    here: ["#56a3f8", "#0a53e4", `<path d="M43 16L14 27Q11 29 14 30L27 31L28 44Q29 47 31 44L43 17Z" fill="#fff" stroke="#fff" stroke-width="1"/>`],
    stops: ["#adacb3", "#6e6f71", `<path d="M18 22A11 11 0 0 0 15 38L20 43L23 39Q14 31 18 22Z" fill="#fff"/><path d="M32 12A13.500 13.500 0 0 1 41 36Q36 39 32 44Q28 39 23 36A13.500 13.500 0 0 1 32 12Z" fill="#fff"/><circle cx="32" cy="26" r="5" fill="#8b8b8f"/>`],
    pin: ["#fa6a9c", "#de1e45", `<circle cx="29" cy="19.500" r="8" fill="#fff"/><path d="M27 28H31L30.500 45Q29 48 27.500 45Z" fill="#fff"/>`],
    add: ["#56a3f8", "#0a53e4", `<path d="M29 17.500V41.500M17 29.500H41" stroke="#fff" stroke-width="5.500" stroke-linecap="round"/>`]
  };
  class StopRow extends Piece {
    static template = "t-row";
    connectedCallback() {
      const [top, bottom, glyph] = MARKS[this.getAttribute("kind")];
      this.shadowRoot.querySelector("span").innerHTML = `<svg width="58" height="58" viewBox="0 0 58 58" aria-hidden="true"><defs><linearGradient id="f" x2="0" y2="1"><stop offset=".2" stop-color="${top}"/><stop offset="1" stop-color="${bottom}"/></linearGradient></defs><circle cx="29" cy="29" r="29" fill="url(#f)"/>${glyph}</svg>`;
    }
  }

  class FilterPill extends Piece {
    static template = "t-pill";
    connectedCallback() {
      const select = this.shadowRoot.querySelector("select");
      select.name = this.getAttribute("name");
      select.setAttribute("aria-label", this.getAttribute("name"));
      select.replaceChildren(new Option(this.getAttribute("value")));
    }
  }

  customElements.define("map-pin", MapPin);
  customElements.define("area-map", AreaMap);
  customElements.define("status-bar", StatusBar);
  customElements.define("weather-chip", WeatherChip);
  customElements.define("map-controls", MapControls);
  customElements.define("travel-modes", TravelModes);
  customElements.define("stop-row", StopRow);
  customElements.define("stop-list", StopList);
  customElements.define("filter-pill", FilterPill);
  customElements.define("route-card", RouteCard);
  customElements.define("directions-sheet", DirectionsSheet);
  customElements.define("maps-app", MapsApp);
</script>
</body>
</html>
